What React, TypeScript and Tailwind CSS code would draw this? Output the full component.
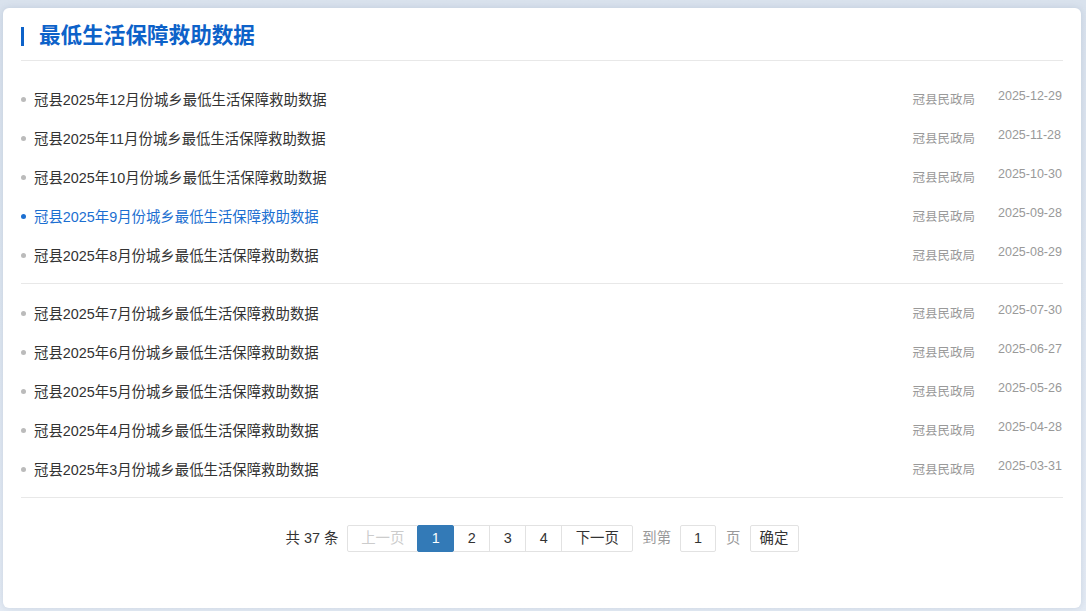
const font = { fontFamily: '"Liberation Sans", "Noto Sans CJK SC", sans-serif' };

type Item = { title: string; dept: string; date: string; active?: boolean };

const groups: Item[][] = [
  [
    { title: '冠县2025年12月份城乡最低生活保障救助数据', dept: '冠县民政局', date: '2025-12-29' },
    { title: '冠县2025年11月份城乡最低生活保障救助数据', dept: '冠县民政局', date: '2025-11-28' },
    { title: '冠县2025年10月份城乡最低生活保障救助数据', dept: '冠县民政局', date: '2025-10-30' },
    { title: '冠县2025年9月份城乡最低生活保障救助数据', dept: '冠县民政局', date: '2025-09-28', active: true },
    { title: '冠县2025年8月份城乡最低生活保障救助数据', dept: '冠县民政局', date: '2025-08-29' },
  ],
  [
    { title: '冠县2025年7月份城乡最低生活保障救助数据', dept: '冠县民政局', date: '2025-07-30' },
    { title: '冠县2025年6月份城乡最低生活保障救助数据', dept: '冠县民政局', date: '2025-06-27' },
    { title: '冠县2025年5月份城乡最低生活保障救助数据', dept: '冠县民政局', date: '2025-05-26' },
    { title: '冠县2025年4月份城乡最低生活保障救助数据', dept: '冠县民政局', date: '2025-04-28' },
    { title: '冠县2025年3月份城乡最低生活保障救助数据', dept: '冠县民政局', date: '2025-03-31' },
  ],
];

function Row({ item }: { item: Item }) {
  return (
    <li className="flex items-center h-[39px]">
      <span
        className={`w-[5px] h-[5px] rounded-full mr-[8px] -mt-[2px] ${item.active ? 'bg-[#1c6fd1]' : 'bg-[#bbbbbb]'}`}
      />
      <a
        className={`flex-1 text-[14.4px] ${item.active ? 'text-[#1c6fd1]' : 'text-[#333333]'}`}
      >
        {item.title}
      </a>
      <span className="text-[12.5px] text-[#999999] mr-[23px]">{item.dept}</span>
      <span className="text-[12.5px] text-[#999999] w-[65px] text-left -mt-[8px]">{item.date}</span>
    </li>
  );
}

function Pager() {
  const box = 'h-[27px] flex items-center justify-center border border-[#e2e2e2] -ml-px';
  return (
    <div className="flex items-center justify-center gap-[9px] text-[14.4px] text-[#333333] mt-[27px]">
      <span>共 37 条</span>
      <div className="flex items-center">
        <span className={`${box} ml-0 w-[71px] text-[#cccccc] rounded-l-[2px]`}>上一页</span>
        <span className="h-[27px] w-[37px] -ml-px flex items-center justify-center bg-[#337ab7] border border-[#337ab7] text-white rounded-[2px] relative">
          1
        </span>
        <span className={`${box} w-[37px]`}>2</span>
        <span className={`${box} w-[37px]`}>3</span>
        <span className={`${box} w-[37px]`}>4</span>
        <span className={`${box} w-[72px] rounded-r-[2px]`}>下一页</span>
      </div>
      <span className="text-[#999999]">到第</span>
      <span className="h-[27px] w-[36px] flex items-center justify-center border border-[#e2e2e2] rounded-[2px]">
        1
      </span>
      <span className="text-[#999999] ml-[1px]">页</span>
      <button className="h-[27px] w-[49px] flex items-center justify-center border border-[#e2e2e2] rounded-[2px] bg-white">
        确定
      </button>
    </div>
  );
}

export default function App() {
  return (
    <div
      className="w-[1086px] h-[611px] bg-gradient-to-b from-[#d9e2ed] to-[#e4ebf4] pt-[8px] pl-[3px] pr-[5px] pb-[3px]"
      style={font}
    >
      <div className="h-full bg-white rounded-[6px] shadow-[0_0_6px_rgba(120,140,170,0.25)] px-[18px]">
        <div className="h-[53px] flex items-center border-b border-[#e8e8e8] pt-[4px]">
          <span className="w-[3px] h-[19px] bg-[#0d62c9] mr-[15px]" />
          <h2 className="text-[21.6px] font-bold text-[#0d62c9]">最低生活保障救助数据</h2>
        </div>
        <ul className="pt-[20px] pb-[7px] border-b border-[#e8e8e8]">
          {groups[0].map((item, i) => (
            <Row key={i} item={item} />
          ))}
        </ul>
        <ul className="pt-[11px] pb-[7px] border-b border-[#e8e8e8]">
          {groups[1].map((item, i) => (
            <Row key={i} item={item} />
          ))}
        </ul>
        <Pager />
      </div>
    </div>
  );
}
